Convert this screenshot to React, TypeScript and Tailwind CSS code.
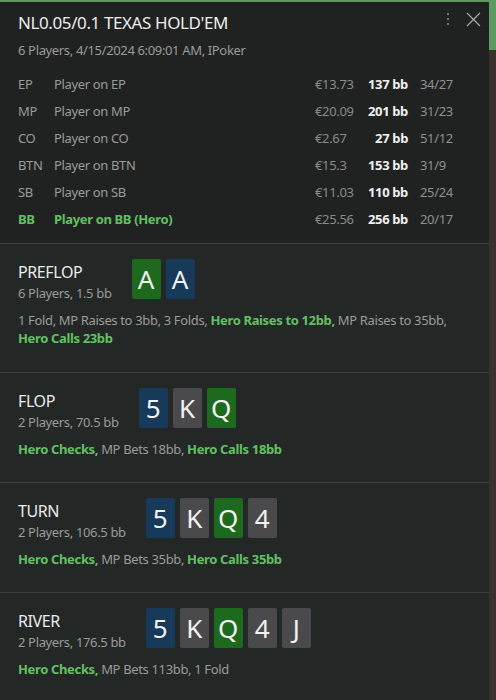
import React from "react";

type Seg = { t: string; hero?: boolean };

const players = [
  { pos: "EP", name: "Player on EP", amt: "€13.73", bb: "137 bb", st: "34/27" },
  { pos: "MP", name: "Player on MP", amt: "€20.09", bb: "201 bb", st: "31/23" },
  { pos: "CO", name: "Player on CO", amt: "€2.67", bb: "27 bb", st: "51/12" },
  { pos: "BTN", name: "Player on BTN", amt: "€15.3", bb: "153 bb", st: "31/9" },
  { pos: "SB", name: "Player on SB", amt: "€11.03", bb: "110 bb", st: "25/24" },
  { pos: "BB", name: "Player on BB (Hero)", amt: "€25.56", bb: "256 bb", st: "20/17", hero: true },
];

type Card = { r: string; c: "b" | "g" | "k" };

const streets: { name: string; sub: string; cards: Card[]; acts: Seg[] }[] = [
  {
    name: "PREFLOP",
    sub: "6 Players, 1.5 bb",
    cards: [
      { r: "A", c: "g" },
      { r: "A", c: "b" },
    ],
    acts: [
      { t: "1 Fold, MP Raises to 3bb, 3 Folds, " },
      { t: "Hero Raises to 12bb,", hero: true },
      { t: " MP Raises to 35bb, " },
      { t: "Hero Calls 23bb", hero: true },
    ],
  },
  {
    name: "FLOP",
    sub: "2 Players, 70.5 bb",
    cards: [
      { r: "5", c: "b" },
      { r: "K", c: "k" },
      { r: "Q", c: "g" },
    ],
    acts: [
      { t: "Hero Checks,", hero: true },
      { t: " MP Bets 18bb, " },
      { t: "Hero Calls 18bb", hero: true },
    ],
  },
  {
    name: "TURN",
    sub: "2 Players, 106.5 bb",
    cards: [
      { r: "5", c: "b" },
      { r: "K", c: "k" },
      { r: "Q", c: "g" },
      { r: "4", c: "k" },
    ],
    acts: [
      { t: "Hero Checks,", hero: true },
      { t: " MP Bets 35bb, " },
      { t: "Hero Calls 35bb", hero: true },
    ],
  },
  {
    name: "RIVER",
    sub: "2 Players, 176.5 bb",
    cards: [
      { r: "5", c: "b" },
      { r: "K", c: "k" },
      { r: "Q", c: "g" },
      { r: "4", c: "k" },
      { r: "J", c: "k" },
    ],
    acts: [
      { t: "Hero Checks,", hero: true },
      { t: " MP Bets 113bb, 1 Fold" },
    ],
  },
];

function CardBox({ card }: { card: Card }) {
  const bg =
    card.c === "b" ? "bg-[#173a5b]" : card.c === "g" ? "bg-[#1d6a1f]" : "bg-[#4a4a4c]";
  return (
    <div
      className={`${bg} w-[29px] h-[40px] rounded-[2px] flex items-center justify-center text-[26px] leading-none text-[#f2f2f2]`}
    >
      {card.r}
    </div>
  );
}

export default function App() {
  return (
    <div
      className="flex w-[496px] h-[700px] overflow-hidden bg-[#3a302c]"
      style={{ fontFamily: '"Noto Sans", "Open Sans", sans-serif' }}
    >
      <div className="flex flex-col w-[489px]">
        <div className="h-[2px] bg-[#5d9a5f]" />
        <div className="flex-1 flex flex-col bg-[#232726] rounded-tr-[3px] overflow-hidden">
          {/* header */}
          <div className="relative bg-[#1f2220] px-[18px] pt-[9px] pb-[10px] border-b border-[#3b3f3d]">
            <div className="text-[17px] leading-[24px] text-[#ececec] tracking-[-0.4px]">
              NL0.05/0.1 TEXAS HOLD'EM
            </div>
            <div className="mt-[6px] text-[13px] leading-[18px] text-[#9b9b9b] tracking-[-0.35px]">
              6 Players, 4/15/2024 6:09:01 AM, IPoker
            </div>
            <div className="absolute right-[40px] top-[11px] flex flex-col gap-[3px]">
              <span className="w-[2px] h-[2px] bg-[#8e8e8e] rounded-full" />
              <span className="w-[2px] h-[2px] bg-[#8e8e8e] rounded-full" />
              <span className="w-[2px] h-[2px] bg-[#8e8e8e] rounded-full" />
            </div>
            <svg
              className="absolute right-[8px] top-[10px]"
              width="15"
              height="15"
              viewBox="0 0 15 15"
              fill="none"
              stroke="#a8a8a8"
              strokeWidth="1.2"
            >
              <path d="M1 1 L14 14 M14 1 L1 14" />
            </svg>
            <div className="mt-[12px] flex flex-col">
              {players.map((p) => (
                <div
                  key={p.pos}
                  className="flex items-center h-[27px] text-[13px] tracking-[-0.35px]"
                >
                  <div
                    className={`w-[36px] ${p.hero ? "text-[#62c062] font-bold" : "text-[#9b9b9b]"}`}
                  >
                    {p.pos}
                  </div>
                  <div
                    className={`w-[261px] ${p.hero ? "text-[#62c062] font-bold" : "text-[#9b9b9b]"}`}
                  >
                    {p.name}
                  </div>
                  <div className="w-[50px] text-[#8a8a8a]">{p.amt}</div>
                  <div className="w-[43px] text-right font-bold text-[#f0f0f0]">{p.bb}</div>
                  <div className="ml-[12px] w-[50px] text-[#8f8f8f]">{p.st}</div>
                </div>
              ))}
            </div>
          </div>
          {/* streets */}
          {streets.map((s, i) => (
            <div
              key={s.name}
              className={`px-[18px] pt-[15px] ${i === 0 ? "pb-[25px]" : "pb-[24px]"} ${i < streets.length - 1 ? "border-b border-[#3b3f3d]" : ""}`}
            >
              <div className="flex items-start gap-[20px] h-[40px]">
                <div className="flex flex-col pt-[2px]">
                  <div className="text-[16px] leading-[22px] text-[#ececec] tracking-[-0.4px]">
                    {s.name}
                  </div>
                  <div className="text-[13px] leading-[20px] text-[#9b9b9b] tracking-[-0.35px]">
                    {s.sub}
                  </div>
                </div>
                <div className="flex gap-[5px]">
                  {s.cards.map((c, j) => (
                    <CardBox key={j} card={c} />
                  ))}
                </div>
              </div>
              <div className="mt-[12px] text-[13px] leading-[18px] text-[#9b9b9b] tracking-[-0.35px]">
                {s.acts.map((a, j) => (
                  <span key={j} className={a.hero ? "text-[#62c062] font-bold" : ""}>
                    {a.t}
                  </span>
                ))}
              </div>
            </div>
          ))}
        </div>
      </div>
      <div className="flex flex-col w-[7px]">
        <div className="h-[50px] bg-[#5d9a5f]" />
        <div className="flex-1 bg-[#3a302c]" />
      </div>
    </div>
  );
}
